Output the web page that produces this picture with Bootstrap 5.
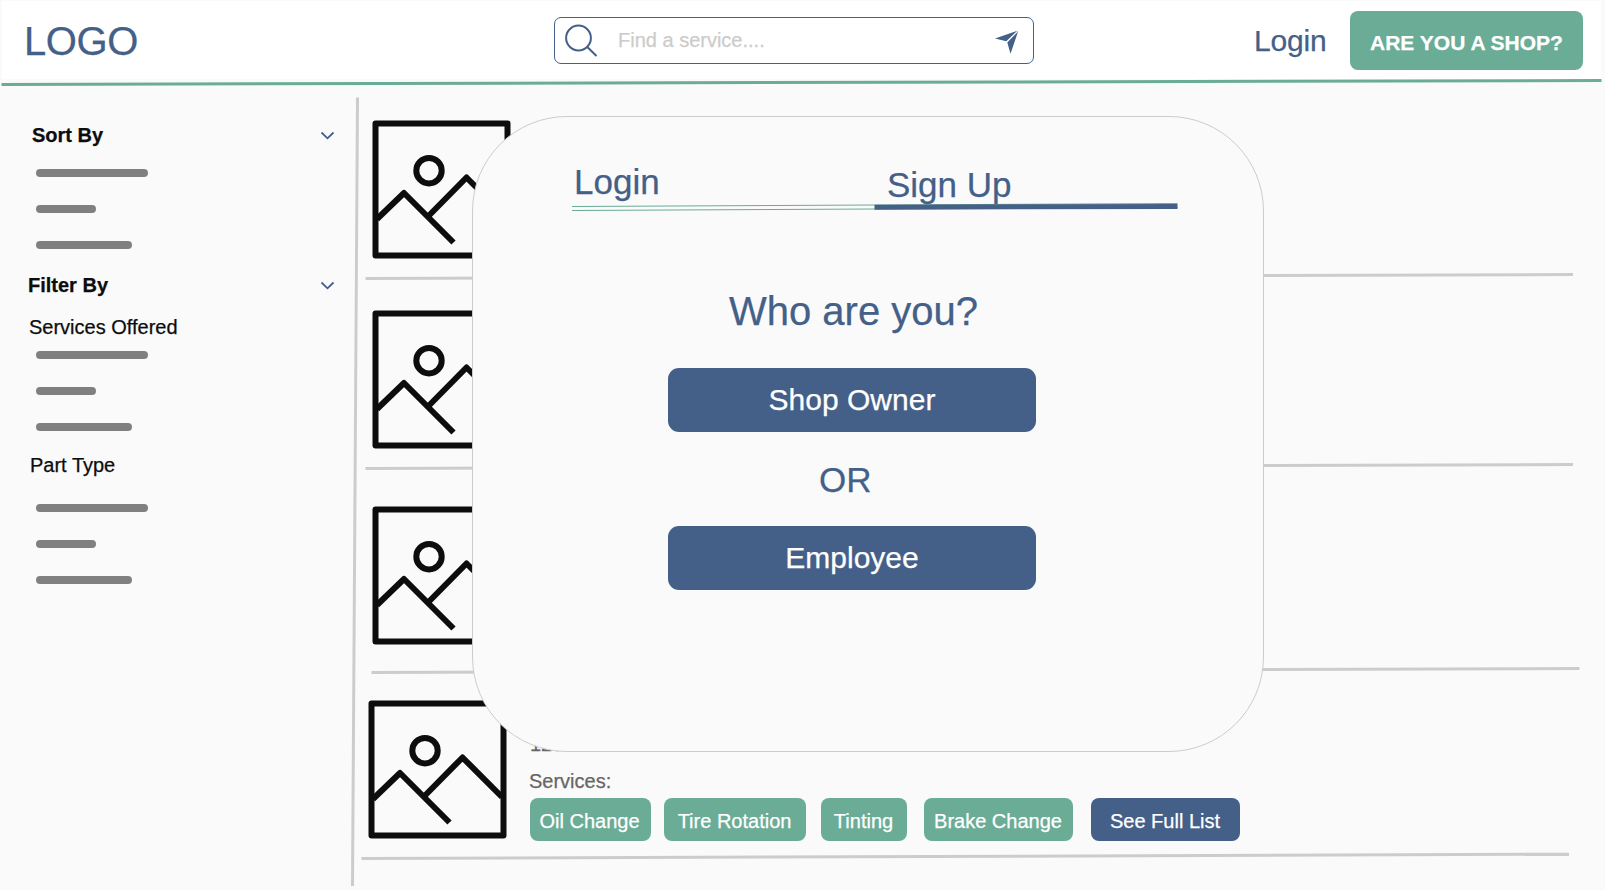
<!DOCTYPE html>
<html lang="en">
<head>
<meta charset="utf-8">
<title>Find a service</title>
<link href="https://cdn.jsdelivr.net/npm/bootstrap@5.3.0/dist/css/bootstrap.min.css" rel="stylesheet">
<style>
:root{--navy:#446088;--sage:#6aac96;--paper:#fafafa}
body{width:1605px;height:890px;overflow:hidden;background:var(--paper);font-family:"Liberation Sans",Arial,sans-serif;font-size:20px;line-height:24px;color:#0d0d0d;-webkit-text-stroke:.25px}
svg{display:block;overflow:visible;flex:none}
.topbar{height:78px;margin:1px 4px 0 2px;background:#fff;padding-left:22px}
.logo-text{width:530px;margin-top:16px;padding:0;font-size:40px;line-height:48px;letter-spacing:-.4px;color:var(--navy)}
.search-box{width:480px;height:47px;margin-top:16px;border:1px solid var(--navy);border-radius:7px;padding-left:10px}
.search-box input{width:376px;margin:-2px 1px 0 21px;padding:0;border:0;background:none;font-size:20px;line-height:24px;height:24px;color:#0d0d0d;box-shadow:none}
.search-box input::placeholder{color:#ccc;opacity:1}
.login-link{width:96px;margin:22px 0 0 220px;padding:0;font-size:30px;line-height:36px;letter-spacing:-.2px;color:var(--navy);text-decoration:none}
.shop-btn{width:233px;height:59px;margin-top:10px;padding:5px 0 0;border:0;border-radius:8px;background:var(--sage);color:#fff;font-size:21px;line-height:24px;font-weight:700;white-space:nowrap}
.sidebar{width:350px;padding:36px 16px 0 28px}
.bars{display:flex;flex-direction:column;gap:28px;padding-left:8px}
.bars span{height:8px;border-radius:4px;background:#808080}
.bars span:nth-child(1){width:112px}.bars span:nth-child(2){width:60px}.bars span:nth-child(3){width:96px}
.shops{width:1245px;padding-top:33px}
.rule{stroke:#ccc;stroke-width:3;fill:none}
.thumb{stroke:#0d0d0d;stroke-width:6;fill:none;margin-left:12px}
.tag{height:43px;border:0;border-radius:8px;padding:3px 0 0;background:var(--sage);color:#fff;font-size:20px;line-height:24px;white-space:nowrap;display:flex;align-items:center;justify-content:center}
.navy-bg{background:var(--navy)}
.dialog-card{position:absolute;left:471.500px;top:116px;width:792px;height:636px;border:1px solid #ccc;border-radius:95px;background:var(--paper);color:var(--navy)}
.tabs-row{height:42px;margin:44px 0 0 101.500px;font-size:35px;line-height:42px}
.choice{width:368px;height:64px;border:0;border-radius:11px;background:var(--navy);color:#fff;font-size:30px;line-height:36px;padding:0;margin-left:195.500px;display:block}
</style>
</head>
<body class="position-relative">
<svg class="d-none"><defs>
<symbol id="photo" viewBox="0 0 139 139" overflow="visible"><path stroke-linejoin="round" d="M3.500 3.500H135.500V135.500H3.500Z"/><circle cx="57" cy="50.7" r="12.700"/><path stroke-linejoin="round" d="M5 99 32 73 81.500 122.500M56 96.500 94.500 57.500 134 97"/></symbol>
</defs></svg>

<header>
  <nav class="topbar d-flex align-items-start">
    <a class="logo-text text-decoration-none" href="#">LOGO</a>
    <form class="search-box d-flex align-items-center">
      <svg width="32" height="32" viewBox="0 0 32 32" fill="none" stroke="#446088" stroke-width="2"><circle cx="13.500" cy="13" r="12.400"/><path d="M22.300 22 31.500 31"/></svg>
      <input class="form-control" type="text" placeholder="Find a service....">
      <svg width="24" height="24" viewBox="0 0 24 24" fill="#446088"><path d="M0 9.500 22.300 1.700 11.300 12.300ZM23.500 1.300 15.500 24.700 12.300 13.400 22.300 3.300Z"/></svg>
    </form>
    <a class="login-link" href="#">Login</a>
    <button class="shop-btn">ARE YOU A SHOP?</button>
  </nav>
  <svg width="1605" height="8" fill="none" stroke="#6aac96" stroke-width="3"><path d="M1.500 5.500 1601.500 1.500"/></svg>
</header>

<main class="d-flex align-items-start">
  <aside class="sidebar">
    <div class="d-flex justify-content-between fw-bold" style="padding-left:4px"><span>Sort By</span>
      <svg width="13" height="24" fill="none" stroke="#446088" stroke-width="1.800"><path d="M.500 9.500 6.500 15.300 12.500 9.500"/></svg></div>
    <div class="bars" style="margin-top:22px"><span></span><span></span><span></span></div>
    <div class="d-flex justify-content-between fw-bold" style="margin-top:24px"><span>Filter By</span>
      <svg width="13" height="24" fill="none" stroke="#446088" stroke-width="1.800"><path d="M.500 9.500 6.500 15.300 12.500 9.500"/></svg></div>
    <div style="margin-top:18px;padding-left:1px">Services Offered</div>
    <div class="bars" style="margin-top:12px"><span></span><span></span><span></span></div>
    <div style="margin-top:22px;padding-left:2px">Part Type</div>
    <div class="bars" style="margin-top:27px"><span></span><span></span><span></span></div>
  </aside>
  <svg class="rule" width="10" height="800"><path d="M7.500 10.500 2.500 799"/></svg>
  <section class="shops">
    <article>
      <svg class="thumb" width="139" height="139"><use href="#photo"/></svg>
      <svg class="rule" width="1245" height="10" style="margin-top:13px"><path d="M5.500 6.500 1213 2.500"/></svg>
    </article>
    <article style="padding-top:28px">
      <svg class="thumb" width="139" height="139"><use href="#photo"/></svg>
      <svg class="rule" width="1245" height="10" style="margin-top:13px"><path d="M5.500 6.500 1213 2.500"/></svg>
    </article>
    <article style="padding-top:34px">
      <svg class="thumb" width="139" height="139"><use href="#photo"/></svg>
      <svg class="rule" width="1245" height="10" style="margin-top:21px"><path d="M11.500 6.500 1219.500 2.500"/></svg>
    </article>
    <article style="padding-top:24px">
      <div class="d-flex" style="height:141px">
        <svg class="thumb" width="139" height="139" style="margin-left:8px"><use href="#photo"/></svg>
        <div style="margin-left:22px;padding-top:32px;color:#666">
          <div style="padding-left:1px">123 Main St</div>
          <div style="margin-top:13px">Services:</div>
          <div class="d-flex" style="margin-top:4.500px;padding-left:.500px">
            <span class="tag" style="width:121px;padding-right:1px">Oil Change</span>
            <span class="tag" style="width:142px;margin-left:13px">Tire Rotation</span>
            <span class="tag" style="width:86px;margin-left:15px">Tinting</span>
            <span class="tag" style="width:149px;margin-left:17px">Brake Change</span>
            <span class="tag navy-bg" style="width:149px;margin-left:18px">See Full List</span>
          </div>
        </div>
      </div>
      <svg class="rule" width="1245" height="10" style="margin-top:11px"><path d="M1.500 6.500 1209 2.200"/></svg>
    </article>
  </section>
</main>

<div class="dialog-card" role="dialog">
  <div class="tabs-row d-flex"><span style="width:313px">Login</span><span style="padding-top:3px">Sign Up</span></div>
  <svg width="606" height="10" style="margin-left:99px" fill="none"><path d="M0 3.500 605.500 .500M0 7.500 605.500 4.500" stroke="#6aac96"/><path d="M302.500 4.200 605.500 3.500" stroke="#446088" stroke-width="5"/></svg>
  <div style="margin:74px 0 0 256.500px;font-size:40px;line-height:48px">Who are you?</div>
  <button class="choice" style="margin-top:32.500px">Shop Owner</button>
  <div style="margin:27px 0 0 346.500px;font-size:35px;line-height:42px">OR</div>
  <button class="choice" style="margin-top:25px">Employee</button>
</div>
<script src="https://cdn.jsdelivr.net/npm/bootstrap@5.3.0/dist/js/bootstrap.bundle.min.js"></script>
</body>
</html>
